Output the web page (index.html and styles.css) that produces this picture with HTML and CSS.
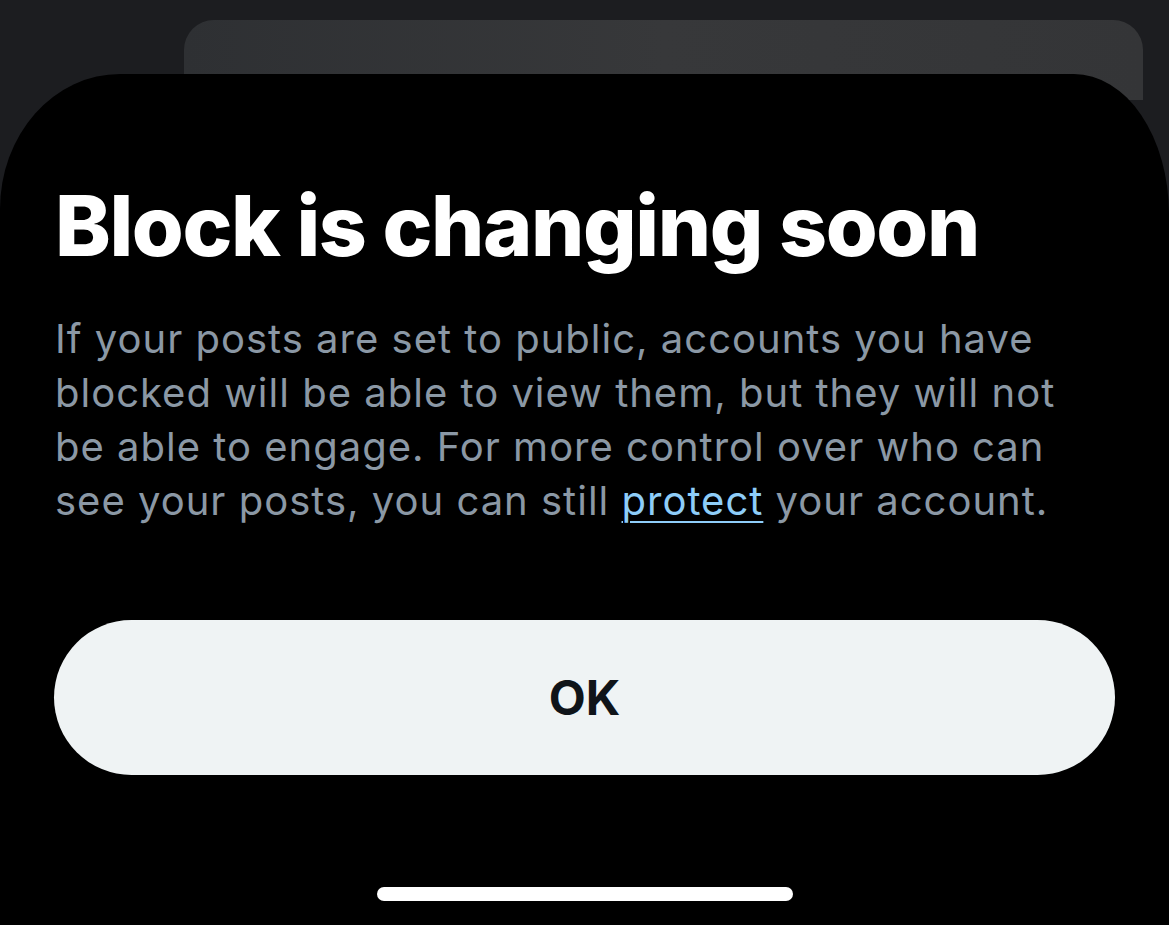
FILE: index.html
```html
<!DOCTYPE html>
<html lang="en">
<head>
<meta charset="utf-8">
<title>Block is changing soon</title>
<link rel="stylesheet" href="styles.css">
</head>
<body>
<div class="screen">
  <div class="back-card"></div>
  <div class="sheet">
    <h1 class="title">Block is changing soon</h1>
    <p class="body">If your posts are set to public, accounts you have blocked will be able to view them, but they will not be able to engage. For more control over who can see your posts, you can still <a class="link" href="#">protect</a> your account.</p>
    <button class="ok-btn" type="button">OK</button>
    <div class="home-bar"></div>
  </div>
</div>
</body>
</html>
```

FILE: styles.css
```css
* { box-sizing: border-box; }
html, body {
  margin: 0;
  padding: 0;
  background: #1c1d20;
}
.screen {
  width: 1169px;
  height: 925px;
  overflow: hidden;
  display: flex;
  flex-direction: column;
  background: #1c1d20;
}
.back-card {
  margin: 20px 26px 0 184px;
  height: 80px;
  flex: none;
  border-radius: 30px 30px 0 0;
  background: linear-gradient(90deg, #2e3033, #37383a 50%, #343537);
}
.sheet {
  margin-top: -26px;
  flex: 1;
  background: #000;
  border-radius: 120px 95px 0 0 / 135px 140px 0 0;
  padding: 0 54px;
  display: flex;
  flex-direction: column;
}
.title {
  margin: 102px 0 0 1px;
  font-family: Inter, "Liberation Sans", sans-serif;
  font-weight: 800;
  font-size: 84px;
  line-height: 100px;
  letter-spacing: -1.4px;
  color: #fff;
}
.body {
  margin: 36px 0 0 1px;
  width: 1010px;
  font-family: Inter, "Liberation Sans", sans-serif;
  font-weight: 400;
  font-size: 40px;
  line-height: 54px;
  color: #8b98a5;
  letter-spacing: 1px;
}
.link {
  color: #8ecdf8;
  text-decoration: underline;
  text-decoration-thickness: 2px;
  text-underline-offset: 6px;
}
.ok-btn {
  margin-top: 92px;
  height: 155px;
  width: 1061px;
  border: none;
  border-radius: 78px;
  background: #eff3f4;
  color: #0f1419;
  font-family: Inter, "Liberation Sans", sans-serif;
  font-weight: 700;
  font-size: 48px;
  padding: 0;
}
.home-bar {
  align-self: center;
  margin-top: 112px;
  width: 416px;
  height: 14px;
  border-radius: 7px;
  background: #fff;
}
```
